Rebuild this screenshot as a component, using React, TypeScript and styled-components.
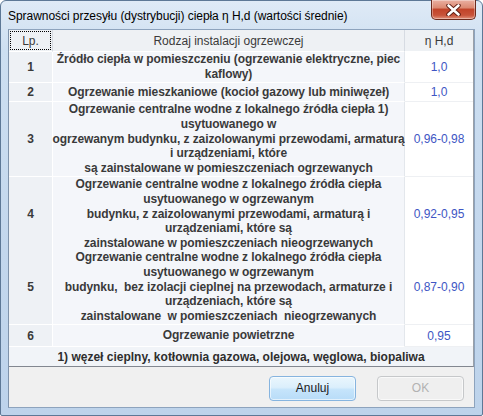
import React from "react";
import styled, { createGlobalStyle } from "styled-components";

const Global = createGlobalStyle`
  html, body { margin: 0; padding: 0; background: #ffffff; }
  #root { width: 483px; height: 416px; }
`;

const Window = styled.div`
  box-sizing: border-box;
  width: 483px;
  height: 416px;
  display: flex;
  flex-direction: column;
  padding: 0 7px 7px 7px;
  background: linear-gradient(180deg, #dfeaf6 0%, #cddff1 12%, #c3d7ed 60%, #bdd3eb 100%);
  border: 1px solid #5d7896;
  border-radius: 6px 6px 2px 2px;
  font-family: "Liberation Sans", Arial, sans-serif;
`;

const TitleBar = styled.div`
  height: 28px;
  display: flex;
  align-items: flex-start;
  justify-content: space-between;
`;

const Title = styled.div`
  font-family: "Liberation Sans", Arial, sans-serif;
  font-size: 12px;
  color: #000;
  padding-top: 8px;
  letter-spacing: -0.05px;
`;

const CloseButton = styled.div`
  width: 45px;
  height: 20px;
  margin-right: -1px;
  margin-top: -1px;
  box-sizing: border-box;
  border: 1px solid #6c2a1d;
  border-top: none;
  border-radius: 0 0 5px 5px;
  background: linear-gradient(180deg, #eab0a2 0%, #dc8a73 40%, #c2442a 50%, #c8533a 80%, #e1927c 100%);
  box-shadow: inset 0 0 0 1px rgba(255, 255, 255, 0.35);
  display: flex;
  align-items: center;
  justify-content: center;
`;

const Client = styled.div`
  flex: 1;
  display: flex;
  flex-direction: column;
  background: #f0f0f0;
  border: 1px solid #8da3bd;
  border-left-color: #7f93ab;
`;

const Table = styled.div`
  display: flex;
  flex-direction: column;
  border-bottom: 1px solid #828790;
  border-right: 1px solid #9aa0a8;
  color: #333;
  font-size: 12px;
`;

const Row = styled.div<{ $h: number }>`
  display: grid;
  grid-template-columns: 44px 352px 1fr;
  height: ${(p) => p.$h}px;
`;

const HeadCell = styled.div<{ $focus?: boolean; $last?: boolean }>`
  position: relative;
  display: flex;
  align-items: center;
  justify-content: center;
  background: #eef1f4;
  border-right: ${(p) => (p.$last ? "none" : "1px solid #d6dbe2")};
  border-bottom: 1px solid #ffffff;
  color: #3a3a3a;
  ${(p) =>
    p.$focus
      ? `&::after {
          content: "";
          position: absolute;
          left: 1px; top: 1px; right: 1px; bottom: 1px;
          border: 1px dotted #000;
        }`
      : ""}
`;

const LpCell = styled.div`
  display: flex;
  align-items: center;
  justify-content: center;
  background: #eef1f5;
  border-right: 1px solid #ffffff;
  border-bottom: 1px solid #ffffff;
  font-weight: bold;
  color: #3a3a3a;
`;

const DescCell = styled.div`
  display: flex;
  align-items: center;
  justify-content: center;
  text-align: center;
  background: #f4f6fa;
  border-right: 1px solid #e3e7ec;
  border-bottom: 1px solid #ffffff;
  font-weight: bold;
  color: #3a3a3a;
  line-height: 14.8px;
  letter-spacing: -0.08px;
  white-space: pre;
  overflow: visible;
`;

const ValCell = styled.div`
  display: flex;
  align-items: center;
  justify-content: center;
  background: #ffffff;
  border-bottom: 1px solid #eef0f3;
  color: #4056c4;
`;

const FootRow = styled.div`
  height: 19px;
  display: flex;
  align-items: center;
  justify-content: center;
  background: #f1f4f8;
  font-weight: bold;
  color: #2e2e2e;
`;

const ButtonBar = styled.div`
  flex: 1;
  display: flex;
  justify-content: flex-end;
  align-items: center;
  gap: 21px;
  padding: 2px 10px 0 0;
`;

const Button = styled.button<{ $disabled?: boolean }>`
  width: 87px;
  height: 25px;
  box-sizing: border-box;
  border-radius: 4px;
  font-family: "Liberation Sans", Arial, sans-serif;
  font-size: 12px;
  padding: 0;
  border: 1px solid ${(p) => (p.$disabled ? "#c6c8ca" : "#86b4df")};
  color: ${(p) => (p.$disabled ? "#b2b2b2" : "#1a1a1a")};
  background: ${(p) =>
    p.$disabled
      ? "#efefef"
      : "linear-gradient(180deg, #eaf6fd 0%, #dbeffc 45%, #c5e4fb 55%, #b8dcf8 100%)"};
  box-shadow: inset 0 0 0 1px rgba(255, 255, 255, 0.6);
`;

type Item = { lp: string; h: number; text: string; val: string };

const rows: Item[] = [
  {
    lp: "1",
    h: 31,
    text: "Źródło ciepła w pomieszczeniu (ogrzewanie elektryczne, piec\nkaflowy)",
    val: "1,0",
  },
  { lp: "2", h: 19, text: "Ogrzewanie mieszkaniowe (kocioł gazowy lub miniwęzeł)", val: "1,0" },
  {
    lp: "3",
    h: 75,
    text:
      "Ogrzewanie centralne wodne z lokalnego źródła ciepła 1)\nusytuowanego w\nogrzewanym budynku, z zaizolowanymi przewodami, armaturą\ni urządzeniami, które\nsą zainstalowane w pomieszczeniach ogrzewanych",
    val: "0,96-0,98",
  },
  {
    lp: "4",
    h: 73,
    text:
      "Ogrzewanie centralne wodne z lokalnego źródła ciepła\nusytuowanego w ogrzewanym\nbudynku, z zaizolowanymi przewodami, armaturą i\nurządzeniami, które są\nzainstalowane w pomieszczeniach nieogrzewanych",
    val: "0,92-0,95",
  },
  {
    lp: "5",
    h: 75,
    text:
      "Ogrzewanie centralne wodne z lokalnego źródła ciepła\nusytuowanego w ogrzewanym\nbudynku,  bez izolacji cieplnej na przewodach, armaturze i\nurządzeniach, które są\nzainstalowane  w pomieszczeniach  nieogrzewanych",
    val: "0,87-0,90",
  },
  { lp: "6", h: 22, text: "Ogrzewanie powietrzne", val: "0,95" },
];

const CloseIcon = () => (
  <svg width="15" height="12" viewBox="0 0 15 12">
    <path d="M2.5 1.5 L12.5 10.5 M12.5 1.5 L2.5 10.5" stroke="#5a1a10" strokeWidth="4.4" strokeLinecap="round" />
    <path d="M2.5 1.5 L12.5 10.5 M12.5 1.5 L2.5 10.5" stroke="#ffffff" strokeWidth="2.6" strokeLinecap="round" />
  </svg>
);

export default function App() {
  return (
    <>
      <Global />
      <Window>
        <TitleBar>
          <Title>Sprawności przesyłu (dystrybucji) ciepła η H,d (wartości średnie)</Title>
          <CloseButton>
            <CloseIcon />
          </CloseButton>
        </TitleBar>
        <Client>
          <Table>
            <Row $h={22}>
              <HeadCell $focus>Lp.</HeadCell>
              <HeadCell>Rodzaj instalacji ogrzewczej</HeadCell>
              <HeadCell $last>η H,d</HeadCell>
            </Row>
            {rows.map((r) => (
              <Row key={r.lp} $h={r.h}>
                <LpCell>{r.lp}</LpCell>
                <DescCell>{r.text}</DescCell>
                <ValCell>{r.val}</ValCell>
              </Row>
            ))}
            <FootRow>1) węzeł cieplny, kotłownia gazowa, olejowa, węglowa, biopaliwa</FootRow>
          </Table>
          <ButtonBar>
            <Button>Anuluj</Button>
            <Button $disabled>OK</Button>
          </ButtonBar>
        </Client>
      </Window>
    </>
  );
}
